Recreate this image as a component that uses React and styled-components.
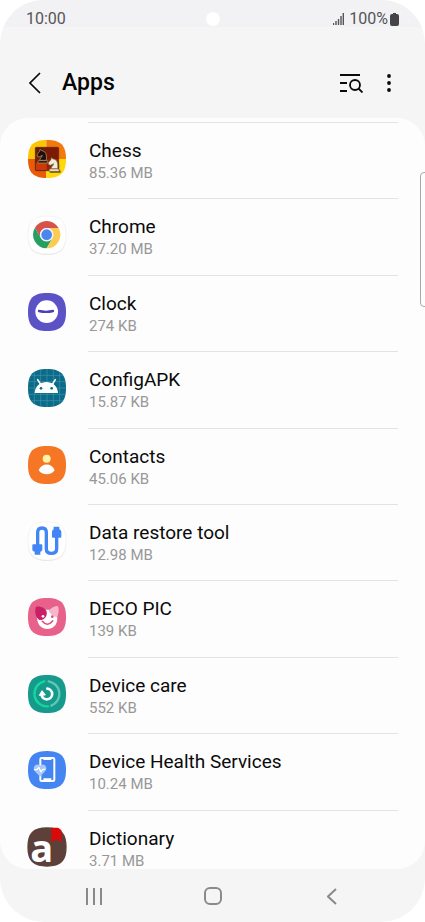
import React from 'react';
import styled, { createGlobalStyle } from 'styled-components';

const GlobalStyle = createGlobalStyle`
  * { box-sizing: border-box; }
  body {
    margin: 0;
    background: #ffffff;
    font-family: Roboto, "Liberation Sans", sans-serif;
  }
`;

const Screen = styled.div`
  position: relative;
  display: flex;
  flex-direction: column;
  height: 100vh;
  overflow: hidden;
  background: #f5f5f5;
  border-radius: 44px;
`;

const StatusBar = styled.div`
  display: grid;
  grid-template-columns: 1fr auto 1fr;
  align-items: center;
  height: 27px;
  padding: 10px 26px 0;
  background: #f2f2f4;
  color: #555557;
  font-size: 16px;
  line-height: 18px;
`;

const Camera = styled.span`
  width: 14px;
  height: 14px;
  border-radius: 50%;
  background: #ffffff;
`;

const StatusIcons = styled.div`
  display: flex;
  align-items: center;
  justify-content: flex-end;
  gap: 2px;
`;

const Signal = styled.svg`
  width: 11px;
  height: 12px;
  margin-right: 3px;
`;

const Battery = styled.svg`
  width: 9px;
  height: 13px;
`;

const Header = styled.header`
  display: flex;
  align-items: center;
  height: 91px;
  padding: 20px 23px 0 23px;
`;

const HeaderActions = styled.div`
  display: flex;
  gap: 12px;
`;

const IconButton = styled.button`
  display: flex;
  align-items: center;
  justify-content: center;
  width: ${({ $width }) => $width}px;
  height: 32px;
  padding: 0;
  border: 0;
  background: none;
  color: ${({ $color }) => $color || '#0a0a0a'};
  svg { display: block; }
`;

const Title = styled.h1`
  flex: 1;
  margin: 0 0 0 15px;
  color: #050505;
  font-size: 23px;
  font-weight: 500;
  line-height: 32px;
`;

const Panel = styled.main`
  flex: 1;
  min-height: 0;
  overflow: hidden;
  padding: 4px 27px 0 28px;
  background: #fdfdfd;
  border-radius: 28px;
`;

const AppList = styled.ul`
  display: grid;
  grid-auto-rows: 1fr;
  min-height: 764px;
  margin: 0;
  padding: 0;
  list-style: none;
`;

const AppRow = styled.li`
  display: flex;
  gap: 22px;
`;

const AppIcon = styled.svg`
  flex: none;
  width: 38px;
  height: 38px;
  margin-top: 18px;
  overflow: visible;
`;

const AppText = styled.div`
  flex: 1;
  padding: 16px 0 0 1px;
  border-top: 1px solid #e3e3e3;
`;

const AppName = styled.div`
  color: #0a0a0a;
  font-size: 19px;
  line-height: 24px;
`;

const AppSize = styled.div`
  color: #989898;
  font-size: 15px;
  line-height: 21px;
`;

const NavBar = styled.nav`
  display: grid;
  grid-template-columns: repeat(3, 119px);
  justify-content: center;
  justify-items: center;
  height: 53px;
  padding-top: 11px;
`;

const EdgeHandle = styled.div`
  position: absolute;
  top: 172px;
  right: -4px;
  width: 9px;
  height: 135px;
  border: 1px solid #a9a9a9;
  border-radius: 4px;
`;

const TILE = 'M57 0C98 0 114 16 114 57S98 114 57 114 0 98 0 57 16 0 57 0Z';

const Tile = ({ fill, outlined }) => (
  <>
    {outlined && <path d={TILE} fill="#dededf" transform="translate(0 2)" />}
    <path d={TILE} fill={fill} stroke={outlined ? '#efeff0' : 'none'} strokeWidth="2" />
  </>
);

const Knight = ({ fill, stroke, transform }) => (
  <g transform={transform} fill={fill} stroke={stroke} strokeWidth="2" strokeLinejoin="round">
    <path d="M9 33C10 26 17 23 17 18L7 23 1 20 2 14 9 6 10 0 15 4C26 5 31 14 29 33Z" />
    <path d="M5 34H32L34 41H3Z" />
  </g>
);

const drawings = {
  chess: (
    <>
      <defs>
        <clipPath id="chess-tile"><path d={TILE} /></clipPath>
        <linearGradient id="chess-board" x1="0" y1="0" x2="1" y2="1">
          <stop offset="0" stopColor="#5c1a08" />
          <stop offset="1" stopColor="#b02a04" />
        </linearGradient>
      </defs>
      <g clipPath="url(#chess-tile)">
        <path fill="#fcc503" d="M0 0H55V57H0Z" />
        <path fill="#f27a0c" d="M55 0H114V57H55Z" />
        <path fill="#e95b09" d="M0 57H55V114H0Z" />
        <path fill="#ffd80a" d="M55 57H114V114H55Z" />
      </g>
      <rect x="22" y="22" width="70" height="70" rx="3" fill="url(#chess-board)" stroke="#55200b" strokeWidth="2" />
      <path fill="#7b1b05" d="M57 24H90V57H57Z" />
      <path fill="#c93a08" d="M24 69H56V90H24Z" />
      <Knight fill="#17120f" stroke="#c59d6c" transform="translate(26 28)" />
      <Knight fill="#5b3711" stroke="#5b3711" transform="translate(63 56)" />
      <Knight fill="#f3ead8" stroke="#8a6f48" transform="translate(60 53)" />
    </>
  ),
  chrome: (
    <>
      <Tile fill="#ffffff" outlined />
      <path fill="#d6524a" d="M20.800 35A41 41 0 0 1 91.800 36H56A20 20 0 0 0 38.700 66Z" />
      <path fill="#fccb52" d="M91.800 36A41 41 0 0 1 55.400 97L73.300 66A20 20 0 0 0 56 36Z" />
      <path fill="#25a060" d="M55.400 97A41 41 0 0 1 20.800 35L38.700 66A20 20 0 0 0 73.300 66Z" />
      <circle cx="56" cy="56" r="20" fill="#eef3fb" />
      <circle cx="56" cy="56" r="16" fill="#4a86ee" />
    </>
  ),
  clock: (
    <>
      <Tile fill="#5b52c6" />
      <circle cx="56" cy="56" r="34" fill="#ffffff" />
      <path d="M33 54Q54 59 75 54" fill="none" stroke="#4a41b4" strokeWidth="7" strokeLinecap="round" />
    </>
  ),
  config: (
    <>
      <Tile fill="#0b6b88" />
      <path d="M19 10V104M38 2V112M57 0V114M76 2V112M95 10V104M10 19H104M2 38H112M0 57H114M2 76H112M10 95H104" stroke="#3f94aa" strokeWidth="2" />
      <path d="M29 32L38 46M82 32L73 46" stroke="#ffffff" strokeWidth="5" strokeLinecap="round" />
      <path d="M20 72C22 28 88 28 90 72Z" fill="#ffffff" />
      <circle cx="39" cy="58" r="4" fill="#0b6b88" />
      <circle cx="71" cy="58" r="4" fill="#0b6b88" />
    </>
  ),
  contacts: (
    <>
      <Tile fill="#f57625" />
      <circle cx="56" cy="38" r="12" fill="#fdf2a6" />
      <path d="M32 73C40 50 72 50 80 73C70 89 42 89 32 73Z" fill="#ffffff" />
    </>
  ),
  restore: (
    <>
      <Tile fill="#ffffff" outlined />
      <path d="M29 70V31Q29 18 42 18Q55 18 55 31V80Q55 94 70 94Q86 94 86 80V42" fill="none" stroke="#4285f4" strokeWidth="10" />
      <path d="M16 67H40Q43 67 43 70V83Q43 87 37 89V98H20V89Q13 87 13 83V70Q13 67 16 67Z" fill="#4285f4" />
      <path d="M77 14H94V22Q100 24 100 29V44Q100 47 97 47H75Q72 47 72 44V29Q72 24 77 22Z" fill="#4285f4" />
    </>
  ),
  deco: (
    <>
      <Tile fill="#e7618b" />
      <path d="M28 50C36 30 78 30 87 50C92 76 78 93 58 93C38 93 24 76 28 50Z" fill="#ffffff" />
      <path d="M90 24C94 38 92 50 86 58C76 54 66 48 62 38C70 29 79 24 90 24Z" fill="#f8b4ca" />
      <path d="M24 26C40 24 52 31 56 41C58 54 51 66 34 66C22 57 19 40 24 26Z" fill="#c91f66" />
      <circle cx="45" cy="55" r="4" fill="#ffffff" />
      <circle cx="73" cy="56" r="4" fill="#d94b7c" />
      <path d="M43 70Q58 88 74 69" fill="none" stroke="#e14f80" strokeWidth="5" strokeLinecap="round" />
    </>
  ),
  care: (
    <>
      <Tile fill="#169a8b" />
      <path d="M62 19A38 38 0 0 1 70 92" fill="none" stroke="#5fc9b5" strokeWidth="7" strokeLinecap="round" />
      <path d="M60 94A38 38 0 0 1 49 19" fill="none" stroke="#13d7a0" strokeWidth="7" strokeLinecap="round" />
      <path d="M58 41A16 16 0 1 1 41 61" fill="none" stroke="#ffffff" strokeWidth="8" strokeLinecap="round" />
      <path d="M34 61L42 47L52 60Z" fill="#ffffff" stroke="#ffffff" strokeWidth="3" strokeLinejoin="round" />
    </>
  ),
  health: (
    <>
      <Tile fill="#4585f2" />
      <rect x="37" y="21" width="42" height="69" rx="4" fill="none" stroke="#ffffff" strokeWidth="6" />
      <path d="M46 22H70V27H46ZM46 82H70V89H46Z" fill="#ffffff" />
      <path d="M36 77L20 60C11 47 27 34 36 44C46 34 62 47 52 60Z" fill="#a9c8fb" />
      <path d="M18 56H27L32 49L39 63L44 55H52" fill="none" stroke="#ffffff" strokeWidth="4" strokeLinejoin="round" />
    </>
  ),
  dictionary: (
    <>
      <path d={TILE} fill="#5c4039" stroke="#5c4039" strokeWidth="4" />
      <path d="M70 -1H90Q98 3 101 8V43L86 34L70 43Z" fill="#d90a0c" />
      <text x="7" y="101" fill="#ffffff" fontFamily="Open Sans, sans-serif" fontSize="114" fontWeight="700">a</text>
    </>
  ),
};

const apps = [
  { icon: 'chess', name: 'Chess', size: '85.36 MB' },
  { icon: 'chrome', name: 'Chrome', size: '37.20 MB' },
  { icon: 'clock', name: 'Clock', size: '274 KB' },
  { icon: 'config', name: 'ConfigAPK', size: '15.87 KB' },
  { icon: 'contacts', name: 'Contacts', size: '45.06 KB' },
  { icon: 'restore', name: 'Data restore tool', size: '12.98 MB' },
  { icon: 'deco', name: 'DECO PIC', size: '139 KB' },
  { icon: 'care', name: 'Device care', size: '552 KB' },
  { icon: 'health', name: 'Device Health Services', size: '10.24 MB' },
  { icon: 'dictionary', name: 'Dictionary', size: '3.71 MB' },
];

export default function App() {
  return (
    <>
      <GlobalStyle />
      <Screen>
        <StatusBar>
          <span>10:00</span>
          <Camera />
          <StatusIcons>
            <Signal viewBox="0 0 11 12" aria-hidden="true">
              <path d="M0.500 10V12M3 8V12M5.500 6V12M8 3V12M10.300 0V12" stroke="#555557" strokeWidth="1.400" />
            </Signal>
            <span>100%</span>
            <Battery viewBox="0 0 9 13" aria-hidden="true">
              <path d="M3 0H6V1H7Q9 1 9 3V11Q9 13 7 13H2Q0 13 0 11V3Q0 1 2 1H3Z" fill="#454547" />
            </Battery>
          </StatusIcons>
        </StatusBar>
        <Header>
          <IconButton $width={24} aria-label="Back">
            <svg width="12" height="22" viewBox="0 0 12 22" fill="none" stroke="currentColor" strokeWidth="1.700">
              <path d="M11 1L1 11L11 21" />
            </svg>
          </IconButton>
          <Title>Apps</Title>
          <HeaderActions>
            <IconButton $width={26} aria-label="Search and filter">
              <svg width="24" height="20" viewBox="0 0 24 20" fill="none" stroke="currentColor" strokeWidth="1.800">
                <path d="M1 2H21M1 10H8M1 18H8" />
                <circle cx="16" cy="12" r="5" />
                <path d="M19.500 15.500L23.500 19.500" />
              </svg>
            </IconButton>
            <IconButton $width={26} aria-label="More options">
              <svg width="4" height="18" viewBox="0 0 4 18" fill="currentColor">
                <circle cx="2" cy="2" r="1.900" />
                <circle cx="2" cy="9" r="1.900" />
                <circle cx="2" cy="16" r="1.900" />
              </svg>
            </IconButton>
          </HeaderActions>
        </Header>
        <Panel>
          <AppList>
            {apps.map((app) => (
              <AppRow key={app.name}>
                <AppIcon viewBox="0 0 114 114" aria-hidden="true">{drawings[app.icon]}</AppIcon>
                <AppText>
                  <AppName>{app.name}</AppName>
                  <AppSize>{app.size}</AppSize>
                </AppText>
              </AppRow>
            ))}
          </AppList>
        </Panel>
        <NavBar>
          <IconButton $width={32} $color="#8a8a8a" aria-label="Recent apps">
            <svg width="16" height="17" viewBox="0 0 16 17" stroke="currentColor" strokeWidth="2">
              <path d="M1 0V17M8 0V17M15 0V17" />
            </svg>
          </IconButton>
          <IconButton $width={32} $color="#8a8a8a" aria-label="Home">
            <svg width="18" height="18" viewBox="0 0 18 18" fill="none" stroke="currentColor" strokeWidth="2">
              <rect x="1" y="1" width="16" height="16" rx="5" />
            </svg>
          </IconButton>
          <IconButton $width={32} $color="#8a8a8a" aria-label="Back">
            <svg width="10" height="17" viewBox="0 0 10 17" fill="none" stroke="currentColor" strokeWidth="2">
              <path d="M9 1L1 8.500L9 16" />
            </svg>
          </IconButton>
        </NavBar>
        <EdgeHandle />
      </Screen>
    </>
  );
}
